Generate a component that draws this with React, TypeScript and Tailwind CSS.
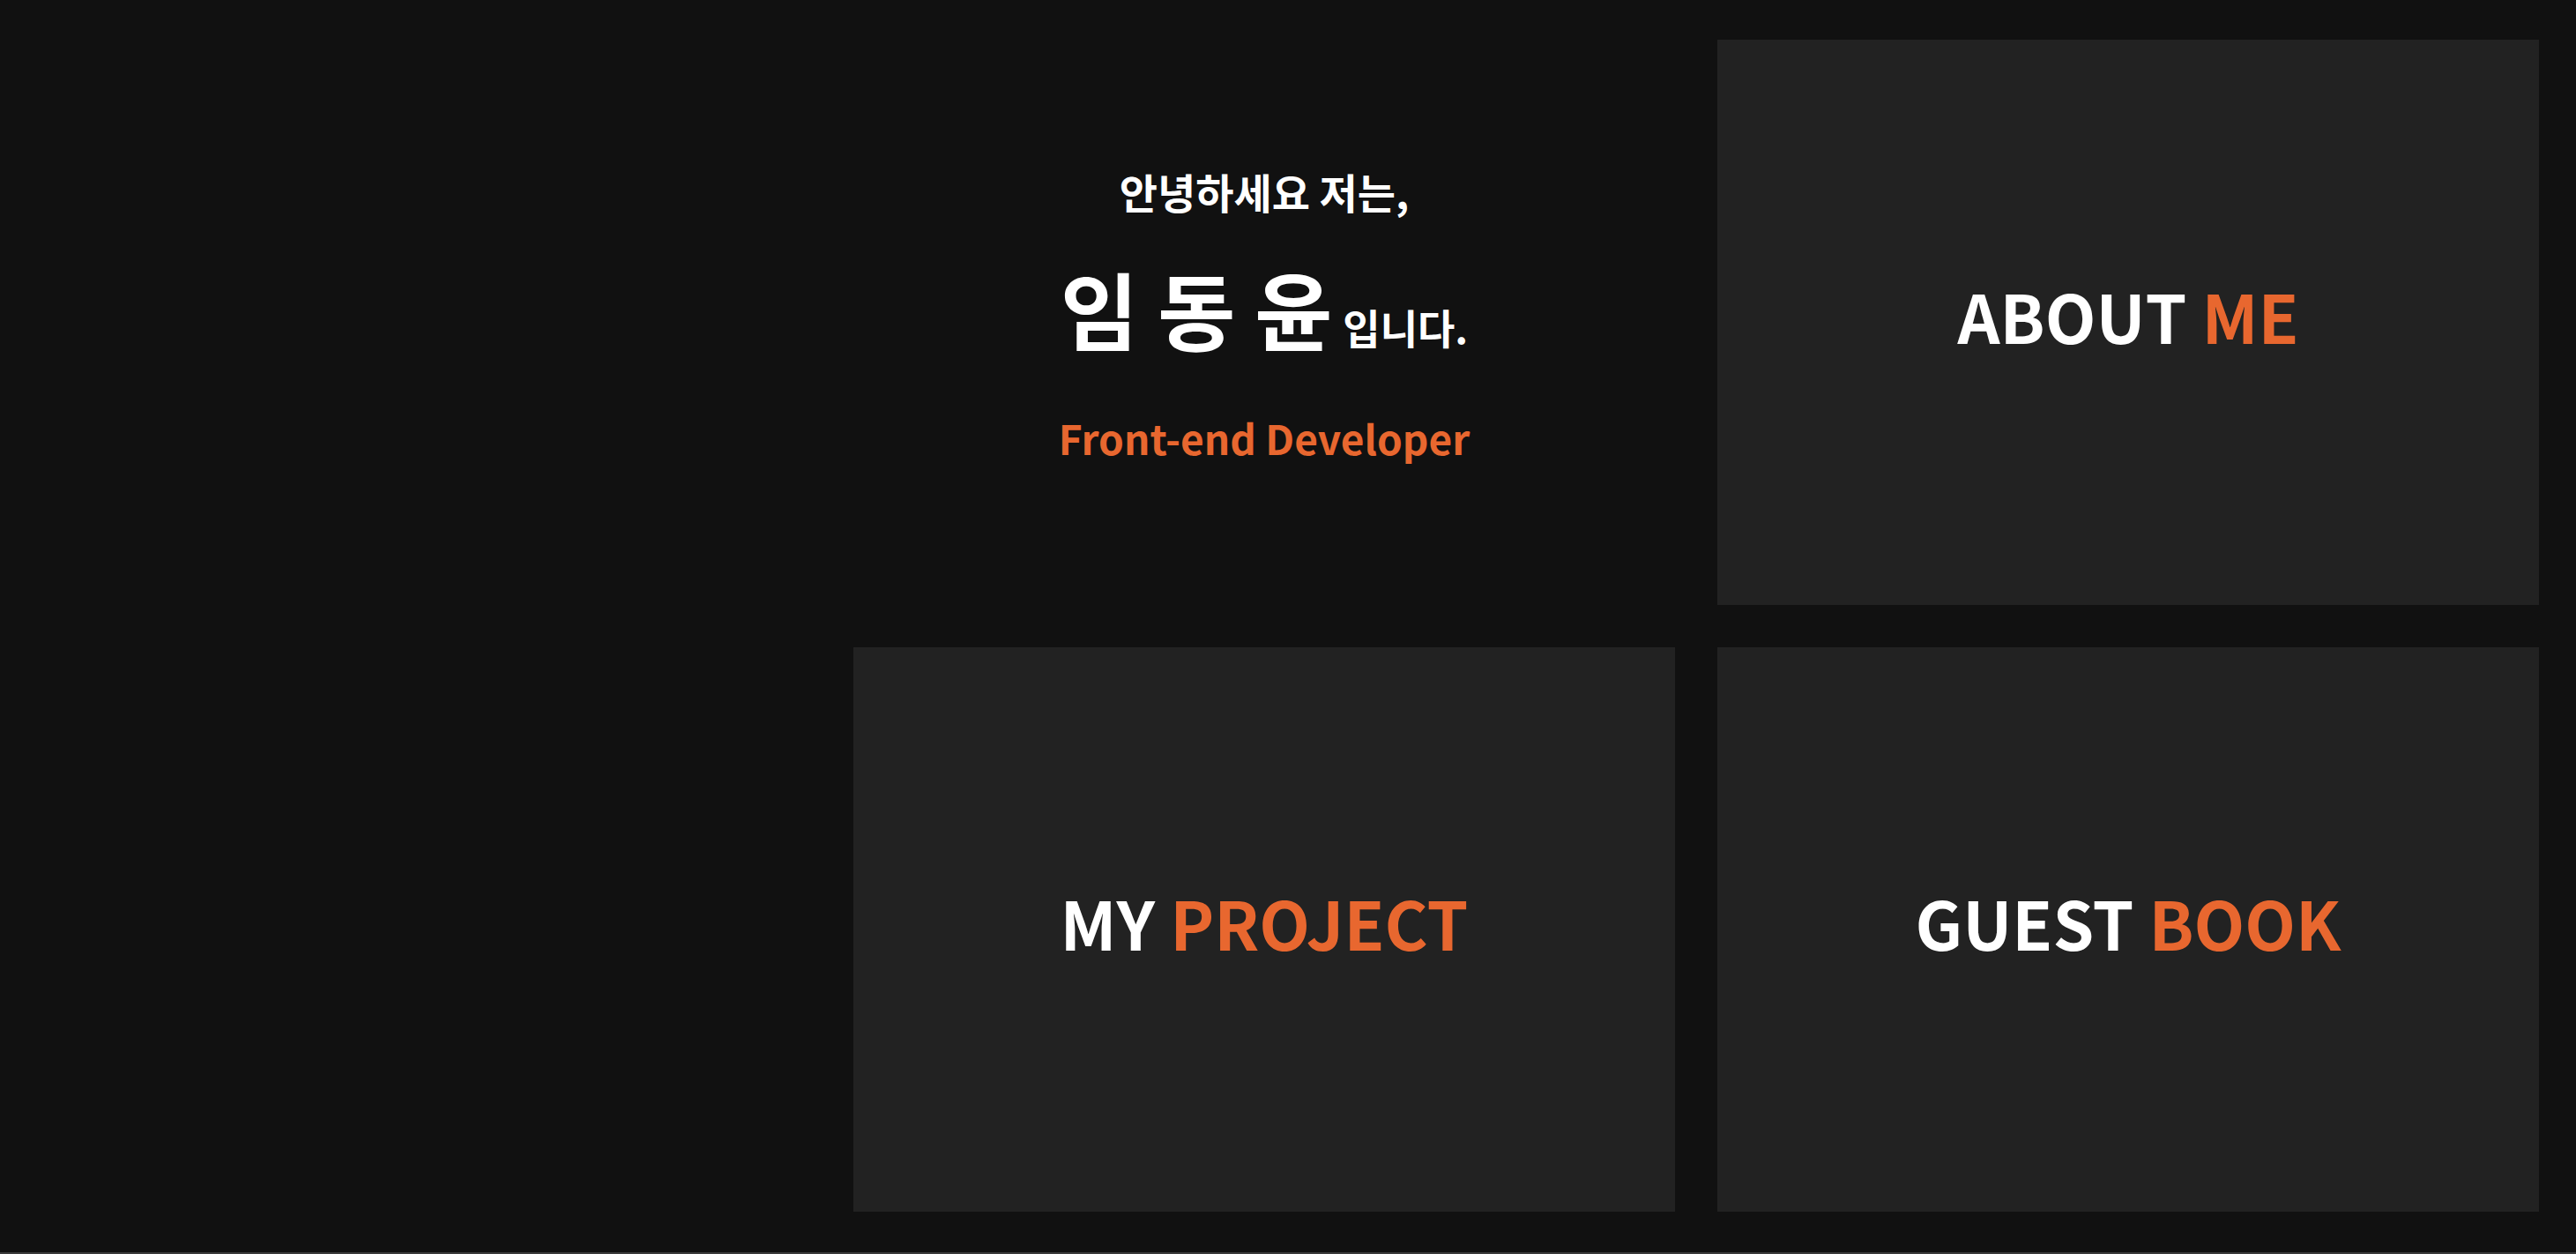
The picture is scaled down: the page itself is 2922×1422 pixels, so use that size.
import React from "react";

const font = { fontFamily: '"Noto Sans CJK KR", "Noto Sans", sans-serif' };

interface CardProps {
  white: string;
  orange: string;
}

const Card = ({ white, orange }: CardProps) => (
  <div className="flex items-center justify-center bg-[#222222] pb-[16px]">
    <p className="text-[75px] font-bold leading-none">
      <span className="text-white">{white}</span>{" "}
      <span className="text-[#e8672f]">{orange}</span>
    </p>
  </div>
);

export default function App() {
  return (
    <div
      className="grid h-[1422px] w-full grid-cols-[1fr_932px_932px] grid-rows-2 gap-12 border-b-2 border-[#3a3a3a] bg-[#111111] pt-[45px] pr-[42px] pb-[46px]"
      style={font}
    >
      <div />
      <div className="flex flex-col items-center justify-center pb-[18px] text-white">
        <p className="text-[47px] font-bold leading-none">안녕하세요 저는,</p>
        <p className="mt-[61px] flex items-baseline font-bold leading-none">
          <span className="text-[96px]">임 동 윤</span>
          <span className="ml-3 text-[46px]">입니다.</span>
        </p>
        <p className="mt-[76px] text-[46px] font-semibold leading-none text-[#e8672f]">
          Front-end Developer
        </p>
      </div>
      <Card white="ABOUT" orange="ME" />
      <div />
      <Card white="MY" orange="PROJECT" />
      <Card white="GUEST" orange="BOOK" />
    </div>
  );
}
